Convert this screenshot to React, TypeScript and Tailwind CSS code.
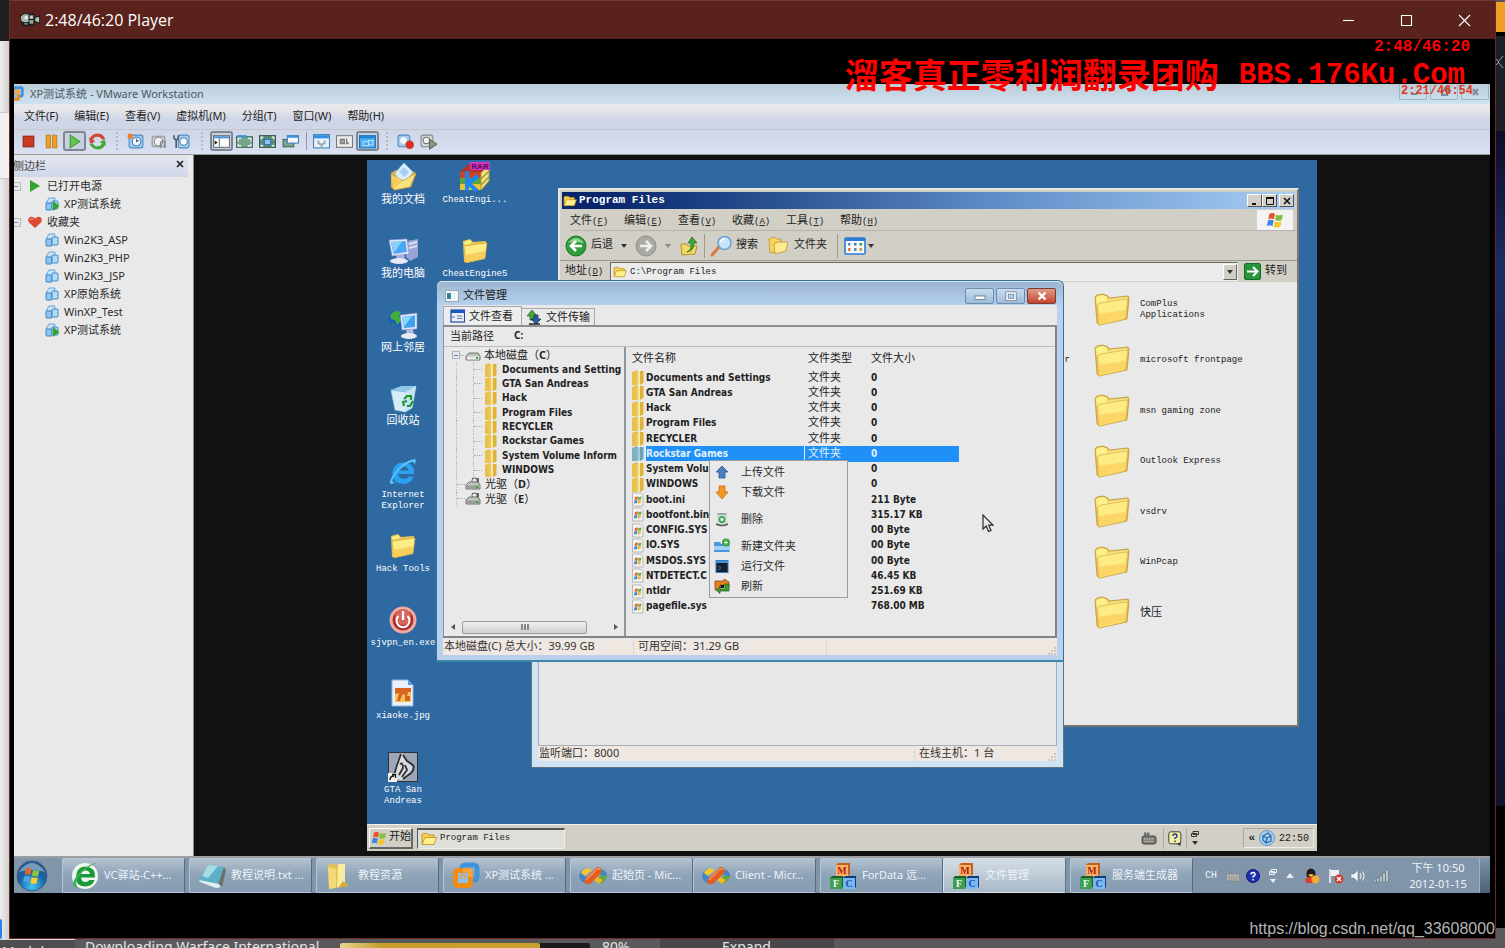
import type { ReactNode } from 'react';

const uiFont = "font-['Noto_Sans','Noto_Sans_CJK_SC',sans-serif]";
const sunFont = "font-['Liberation_Mono','Noto_Sans_CJK_SC',monospace]";

/* ---------- Icons ---------- */

function BigFolder({ className = 'w-9 h-[34px]' }: { className?: string }) {
  return (
    <svg viewBox="0 0 36 34" className={className} aria-hidden="true">
      <path d="M1 4 L3 2 L9 1 L14 3 L15 5 L34 3 L35 5 L33 26 L5 32 L3 30 Z" fill="#ecc650" stroke="#b8923a" strokeWidth="0.8" />
      <path d="M2 5 L4 3 L9 2 L13 4 L14 9 L6 10 L3 13 Z" fill="#faf08c" />
      <path d="M15 6 L33 4 L33 6 L13 9 Z" fill="#f7e48a" />
      <path d="M3.500 13 Q3.500 10.500 7 10 L31 6 Q33.500 6 33.500 8 L31.500 24 Q31 26 29 26.500 L5 32 Z" fill="#fdec86" stroke="#e0b346" strokeWidth="0.8" />
      <path d="M4.500 21 L31.500 17 L30.500 25 L5.500 31 Z" fill="#fbd566" />
    </svg>
  );
}

function DeskFolder() {
  return (
    <svg viewBox="0 0 32 32" className="w-8 h-8" aria-hidden="true">
      <path d="M4 6 L11 4 L14 7 L27 6 L26 24 L8 28 L5 27 Z" fill="#ecc650" />
      <path d="M5 7 L11 5 L13 8 L6 10 Z" fill="#faf08c" />
      <path d="M5 11 L13 10 L15 9.500 L28 8 L26 23 L7 27.500 Z" fill="#fdec86" stroke="#d3a53a" strokeWidth="0.7" />
      <path d="M6 20 L26.500 16 L25.500 23 L7 27 Z" fill="#f9cf5b" />
    </svg>
  );
}

function SmallFolder({ className = 'w-4 h-[14px]' }: { className?: string }) {
  return (
    <svg viewBox="0 0 16 14" className={className} aria-hidden="true">
      <path d="M1 12 V3 Q1 1.500 2.500 1.500 H6 L8 3 H13 V6" fill="#f6cf55" stroke="#b98b1d" strokeWidth="0.8" />
      <path d="M1 12.500 L4 5.500 H15.500 L13 12.500 Z" fill="#fff08e" stroke="#b98b1d" strokeWidth="0.8" />
    </svg>
  );
}

function DocsIcon() {
  return (
    <svg viewBox="0 0 32 32" className="w-8 h-8" aria-hidden="true">
      <path d="M4 12 L9 9 L26 10 L29 13 L24 26 L7 29 L4 26 Z" fill="#e3b540" />
      <path d="M8 12 L17 2 L26 11 L20 20 L10 18 Z" fill="#dceefa" stroke="#8bb8dc" strokeWidth="0.8" />
      <path d="M12 11 L17 6 L22 11 L18 16 Z" fill="#a6d1f2" />
      <path d="M4 13 L16 20 L29 12 L23 26 L7 29 Z" fill="#fae27c" stroke="#cfa036" strokeWidth="0.8" />
      <path d="M4 14 L15 21 L6 28 Z" fill="#f6cc58" />
    </svg>
  );
}

function ComputerIcon() {
  return (
    <svg viewBox="0 0 32 32" className="w-8 h-8" aria-hidden="true">
      <path d="M20 6 L31 4 L31 22 L23 26 L19 22 Z" fill="#9aa3d6" />
      <path d="M22 8 L30 6 V8 L22 10 Z M22 12 L30 10 V12 L22 14 Z" fill="#dfe3f7" />
      <path d="M2 5 L20 4 L22 19 L5 21 Z" fill="#e3e7f6" stroke="#8892c4" strokeWidth="0.6" />
      <path d="M4 7 L18.500 6 L20 17 L6.500 19 Z" fill="#4aa8f0" />
      <path d="M4 7 L15 6 L7 18 Z" fill="#87d3fb" />
      <path d="M9 20 L17 19 L18 24 L10 25 Z" fill="#aab1dc" />
      <ellipse cx="12" cy="26" rx="9" ry="3" fill="#e6e8f4" />
    </svg>
  );
}

function NetworkIcon() {
  return (
    <svg viewBox="0 0 32 32" className="w-8 h-8" aria-hidden="true">
      <circle cx="10" cy="10" r="8" fill="#1f58bf" />
      <path d="M3 7 Q7 0 14 3 L12 8 L15 11 L10 16 L8 11 L4 10 Z" fill="#3fae3c" />
      <path d="M4 13 L9 17 L7 17 Z" fill="#3fae3c" />
      <path d="M13 6 L30 4 L30 20 L15 21 Z" fill="#dfe5f7" stroke="#7f8bc2" strokeWidth="0.6" />
      <path d="M15 8 L28 6.500 L28 18 L17 19 Z" fill="#3fa3ef" />
      <path d="M15 8 L25 7 L17 18 Z" fill="#8bd6fc" />
      <path d="M19 21 L26 20 L27 26 L20 26 Z" fill="#b3b9e0" />
      <ellipse cx="22" cy="27" rx="8" ry="3" fill="#e8eaf6" />
    </svg>
  );
}

function RecycleBin() {
  return (
    <svg viewBox="0 0 32 32" className="w-8 h-8" aria-hidden="true">
      <path d="M4 8 L18 10 L29 4 L25 26 L18 30 L8 28 Z" fill="#d6edf7" stroke="#9cc7e2" strokeWidth="0.8" />
      <path d="M4 8 L14 4 L29 4 L18 10 Z" fill="#8fc9ec" />
      <path d="M18 10 L29 4 L25 26 L18 30 Z" fill="#c3e3f3" />
      <path d="M17 17 L20 14 L24 14 V18 M26 19 L23 24 L20 24 M17 24 L16 20 L20 19" fill="none" stroke="#1f9a2f" strokeWidth="2.200" />
    </svg>
  );
}

function IeIcon() {
  return (
    <svg viewBox="0 0 32 32" className="w-8 h-8" aria-hidden="true">
      <path d="M27 18 H11 Q12 23 17 23 Q20 23 21.500 20.500 H26.500 Q24 28 16 28 Q5 27 5.500 17 Q6 7 16.500 6.500 Q28 7 27 18 Z M11.500 14.500 H21.500 Q21 10.500 16.500 10.500 Q12.500 10.500 11.500 14.500 Z" fill="#2ba1f3" fillRule="evenodd" />
      <path d="M5 28 Q0 28 6 19 Q15 5 27 3 Q31 3 27 9 Q28 4 22 7 Q10 14 6 23 Q4 27 9 26 Z" fill="#56c1fb" />
    </svg>
  );
}

function PowerIcon() {
  return (
    <svg viewBox="0 0 32 32" className="w-8 h-8" aria-hidden="true">
      <circle cx="16" cy="16" r="13.500" fill="#f3aaa4" />
      <circle cx="16" cy="16" r="10.500" fill="#a82f2c" />
      <circle cx="16" cy="13" r="8" fill="#d5645c" />
      <path d="M11.500 12 A6.500 6.500 0 1 0 20.500 12" fill="none" stroke="#fff" strokeWidth="2" />
      <path d="M16 7 V16" stroke="#fff" strokeWidth="2.400" />
    </svg>
  );
}

function JpgIcon() {
  return (
    <svg viewBox="0 0 32 32" className="w-8 h-8" aria-hidden="true">
      <path d="M5 3 H21 L26 8 V29 H5 Z" fill="#eaf1fb" stroke="#8fb4e4" />
      <path d="M21 3 V8 H26 Z" fill="#4f9de8" />
      <path d="M8 11 H24 V25 H8 Z" fill="#f6c25c" />
      <path d="M8 11 H24 V15 H21 L20 19 H23 V24 H18 V17 L15 18 L13 24 H10 L12 16 L8 17 Z" fill="#d9641f" />
    </svg>
  );
}

function GtaIcon() {
  return (
    <svg viewBox="0 0 32 32" className="w-8 h-8" aria-hidden="true">
      <rect x="1.500" y="1.500" width="29" height="29" fill="#9da6b9" stroke="#2c3038" />
      <path d="M6 24 L10 10 L15 2 L19 9 L26 16 L23 24 L15 29 L9 28 Z" fill="#d8dadd" />
      <path d="M14 3 L10 14 L7 24 M16 4 L20 10 L26 14 Q28 18 24 22 L16 28 M13 13 Q16 11 16 17 L12 24 M18 14 L20 19 L15 26" fill="none" stroke="#2b2d31" strokeWidth="1.800" />
      <rect x="1" y="22" width="9" height="9" fill="#f2f2f2" />
      <path d="M3 29 Q3 25 7 25 M5 23.500 H8.500 V27" fill="none" stroke="#111" strokeWidth="1.400" />
    </svg>
  );
}

function RarIcon() {
  return (
    <svg viewBox="0 0 32 32" className="w-8 h-8" aria-hidden="true">
      <path d="M1 11 L10 3 H30 L22 12 Z" fill="#b53324" />
      <path d="M1 11 H22 V17 H1 Z" fill="#c9432c" />
      <path d="M1 17 H22 V23 H1 Z" fill="#5fa13a" />
      <path d="M1 23 H22 V29 H1 Z" fill="#e8c332" />
      <path d="M22 12 L30 4 V20 L22 29 Z" fill="#efe38b" stroke="#b59a31" />
      <path d="M22 18 L30 10 M22 24 L30 16" stroke="#a58f2f" strokeWidth="1.200" />
      <path d="M8 10 V30 M19 15 L9 22 L18 30" fill="none" stroke="#1a86ee" strokeWidth="4" />
      <rect x="11" y="1" width="20" height="8" fill="#d036c4" />
      <text x="21" y="8" fontSize="8" fontWeight="700" textAnchor="middle" fill="#5a0d52" fontFamily="Liberation Sans">RAR</text>
    </svg>
  );
}

function WinFlag({ className = 'w-4 h-4' }: { className?: string }) {
  return (
    <svg viewBox="0 0 16 16" className={className} aria-hidden="true">
      <path d="M3 2.500 Q5.500 1 8 2.500 L7 7.500 Q4.500 6 2 7.500 Z" fill="#e8542a" />
      <path d="M9 3 Q11.500 4.500 15 3 L14 8 Q11 9.500 8 8 Z" fill="#7fc241" />
      <path d="M1.800 8.500 Q4.300 7 6.800 8.500 L5.800 13.500 Q3.300 12 .8 13.500 Z" fill="#3a86dd" />
      <path d="M7.800 9 Q10.500 10.500 13.700 9 L12.700 14 Q10 15.500 6.800 14 Z" fill="#f7c52d" />
    </svg>
  );
}

function ZipFolder({ selected = false, className = 'h-[14px]' }: { selected?: boolean; className?: string }) {
  return (
    <svg viewBox="0 0 14 15" className={`w-[14px] shrink-0 ${className}`} preserveAspectRatio="none" aria-hidden="true">
      <path d="M1 2 L6 0 V15 H1 Z" fill={selected ? '#7fb0bf' : '#eac04a'} />
      <path d="M5 2 L10 1 V14 L5 15 Z" fill={selected ? '#9fd0df' : '#f9e893'} />
      <path d="M9 1 H12.500 V13 L9 15 Z" fill={selected ? '#6ba3bb' : '#dfb23c'} />
      <path d="M6 1 V15" stroke={selected ? '#5b8fa3' : '#c99a2a'} strokeWidth="0.8" />
    </svg>
  );
}

function SysFile() {
  return (
    <svg viewBox="0 0 14 15" className="w-[14px] h-[15px] shrink-0" aria-hidden="true">
      <path d="M1.500 1 H9.500 L12 3.500 V14 H1.500 Z" fill="#f3f3f3" stroke="#a9a9a9" strokeWidth="0.8" />
      <path d="M4 5 L7 4.500 L6.500 7.500 L3.500 8 Z" fill="#e5652e" />
      <path d="M7.500 5 L10.500 4.500 L10 7.500 L7 8 Z" fill="#63b043" />
      <path d="M3.400 8.600 L6.400 8 L6 11 L3 11.500 Z" fill="#3d84d6" />
      <path d="M7 8.600 L10 8 L9.500 11 L6.500 11.500 Z" fill="#efb92e" />
    </svg>
  );
}

function DriveIcon({ disc = false }: { disc?: boolean }) {
  return (
    <svg viewBox="0 0 16 14" className="w-4 h-[14px] shrink-0" aria-hidden="true">
      {disc && <path d="M7 1 H14 V7 H7 Z" fill="#6b6b6b" />}
      {disc && <circle cx="9.500" cy="3.500" r="2.600" fill="#e8e8e8" stroke="#333" strokeWidth="0.7" />}
      <path d="M1 8 L4 5 H13 L15 8 V12 H1 Z" fill="#c2c4c2" stroke="#666" strokeWidth="0.9" />
      <path d="M2 8.500 H14 V11.500 H2 Z" fill={disc ? '#9b9b9b' : '#ececec'} />
      <rect x="11" y="9" width="2" height="2" fill="#3ea33c" />
    </svg>
  );
}

function VmIcon({ running = false }: { running?: boolean }) {
  return (
    <svg viewBox="0 0 16 14" className="w-4 h-[14px] shrink-0" aria-hidden="true">
      <path d="M2 6 L5 1 L11 1 L10 8 Z" fill="#c9e4f8" stroke="#5a9fd8" strokeWidth="0.9" />
      <rect x="2" y="6" width="6" height="7" rx="1" fill="#8cc6f1" stroke="#2f76b5" strokeWidth="0.9" />
      <rect x="8" y="4" width="6" height="8" rx="1" fill="#b4dcf8" stroke="#2f7fc5" strokeWidth="0.9" />
      {running && <path d="M9 4 L15.500 9 L9 14 Z" fill="#36a52e" />}
    </svg>
  );
}

function VmwareLogo({ className }: { className: string }) {
  return (
    <svg viewBox="0 0 28 28" className={className} aria-hidden="true">
      <rect x="10" y="3" width="15" height="15" rx="3" fill="none" stroke="#3f94dc" strokeWidth="5" />
      <rect x="3.500" y="8.500" width="15" height="15" rx="2" fill="none" stroke="#f08b16" strokeWidth="5" />
      <rect x="6" y="11" width="10" height="10" fill="#8fc0ea" />
      <path d="M9 17 V13 H13 V17" fill="none" stroke="#e9a24a" strokeWidth="1.500" />
      <path d="M11 8.500 H17 Q18.500 8.500 18.500 11 V15" fill="none" stroke="#f7a83c" strokeWidth="4" />
    </svg>
  );
}

function CameraIcon() {
  return (
    <svg viewBox="0 0 22 16" className="w-[21px] h-4" aria-hidden="true">
      <path d="M0 3 L3 1 H15 V5 L21 3 V12 L15 10 V13 L7 15 L2 13 Z" fill="#1b1d1c" />
      <path d="M1 4 L4 2 H9 V10 H3 L1 8 Z" fill="#a8b3ad" />
      <path d="M5 4 H8 V7 H5 Z" fill="#f2f5f3" />
      <path d="M10 3 H14 V7 H10 Z M10 8 H14 V12 H10 Z" fill="#8fa39b" />
      <path d="M11 4 H13 V6 H11 Z" fill="#e3e9e6" />
      <path d="M16 6 L20 4.500 V10.500 L16 9 Z" fill="#b3c0bb" />
      <path d="M4 11 H8 V13 H5 Z" fill="#5d9277" />
    </svg>
  );
}

/* ---------- VMware toolbar ---------- */

function ToolGlyph({ name }: { name: string }) {
  const glyphs: Record<string, ReactNode> = {
    stop: <rect x="3" y="3" width="10" height="10" fill="#cc3b22" stroke="#8e2414" />,
    pause: <path d="M3 2 H7 V14 H3 Z M9 2 H13 V14 H9 Z" fill="#f2a01e" stroke="#b5700a" strokeWidth="0.7" />,
    play: <path d="M4 2 L13 8 L4 14 Z" fill="#66c552" stroke="#3b9a2b" />,
    reset: (
      <>
        <path d="M2 7 Q3 2 8 2 Q12 2 14 6" fill="none" stroke="#d0463a" strokeWidth="3" />
        <path d="M14 9 Q13 14 8 14 Q4 14 2 10" fill="none" stroke="#43a83c" strokeWidth="3" />
        <path d="M0 4 L1 10 L6 8 Z" fill="#d0463a" />
        <path d="M16 12 L15 6 L10 8.500 Z" fill="#43a83c" />
      </>
    ),
    snap: (
      <>
        <rect x="2" y="2" width="13" height="12" rx="2" fill="#9ccbef" stroke="#4d8dc2" />
        <circle cx="9" cy="8" r="4" fill="#f4f9fd" stroke="#4a7fb0" />
        <path d="M9 5.500 V8 L11 7" fill="none" stroke="#315f8b" />
        <circle cx="3" cy="3" r="2.500" fill="#f07d2b" />
      </>
    ),
    revert: (
      <>
        <rect x="2" y="3" width="12" height="10" rx="2" fill="#d0d3d6" stroke="#8e9397" />
        <circle cx="8" cy="8" r="4" fill="#eef0f1" stroke="#8b9094" />
        <path d="M10 14 V10 Q10 7 14 8 V14" fill="none" stroke="#858a8e" strokeWidth="1.500" />
      </>
    ),
    manage: (
      <>
        <rect x="5" y="2" width="10" height="12" rx="2" fill="#a5cfee" stroke="#4d8dc2" />
        <circle cx="10" cy="8" r="3.500" fill="#f2f8fc" stroke="#4a7fb0" />
        <path d="M1 2 V5 L3 7 V14 M5 2 V5 L3 7" fill="none" stroke="#4c5964" strokeWidth="1.500" />
      </>
    ),
    sidebar: (
      <>
        <rect x="0.500" y="2.500" width="15" height="11" fill="#fafafa" stroke="#6c7177" />
        <path d="M1 3 H15 V5 H1 Z" fill="#4f97d8" />
        <path d="M6 5 V13" stroke="#6c7177" />
        <path d="M1.500 7 L4.500 9 L1.500 11 Z" fill="#222" />
      </>
    ),
    fit: (
      <>
        <rect x="0.500" y="3.500" width="15" height="10" fill="#76a58f" stroke="#3f6b58" />
        <path d="M1 2 H10 V4 H1 Z" fill="#3f93d8" />
        <path d="M2 8 V5 H5 M11 5 H14 V8 M14 10 V12 H11 M5 12 H2 V10" fill="none" stroke="#e9f3ee" strokeWidth="1.200" />
      </>
    ),
    full: (
      <>
        <rect x="0.500" y="2.500" width="15" height="11" fill="#5d8c79" stroke="#35594a" />
        <rect x="5" y="6" width="6" height="5" fill="#8ac6f0" stroke="#2a6ea8" />
        <path d="M2 6 V4 H4 M12 4 H14 V6 M14 11 V12 H12 M4 12 H2 V11" fill="none" stroke="#e9f3ee" strokeWidth="1.200" />
      </>
    ),
    unity: (
      <>
        <rect x="1" y="6" width="10" height="7" fill="#79a58f" stroke="#3f6b58" />
        <rect x="5" y="2.500" width="10.500" height="7" fill="#f4f8fb" stroke="#3f80b5" />
        <path d="M5 2.500 H15.500 V4.500 H5 Z" fill="#3f93d8" />
      </>
    ),
    settings: (
      <>
        <rect x="0.500" y="1.500" width="15" height="12.500" fill="#e8f2fa" stroke="#3f80b5" />
        <path d="M1 2 H15 V5 H1 Z" fill="#2f8fe0" />
        <path d="M5 7 V9.500 Q8 12 11 9.500 V7 M8 10 V14" fill="none" stroke="#9aa7b1" strokeWidth="1.800" />
      </>
    ),
    summary: (
      <>
        <rect x="0.500" y="2.500" width="15" height="11" fill="#ededea" stroke="#77797a" />
        <path d="M4 6 H8 V10 H4 Z M10 5 V10 H12" fill="#a0a19f" stroke="#77797a" />
      </>
    ),
    console: (
      <>
        <rect x="0.500" y="2.500" width="15" height="11.500" fill="#50aff0" stroke="#2471b8" />
        <path d="M1 3 H15 V5 H1 Z" fill="#1e7fd6" />
        <path d="M4 8 H9 V12 H4 Z M9 7 H13 V11 H9 Z" fill="none" stroke="#b9e2fc" />
      </>
    ),
    rec: (
      <>
        <rect x="1" y="2" width="11" height="11" rx="2" fill="#a7cdea" stroke="#4d8dc2" />
        <circle cx="6" cy="7" r="3" fill="#f2f8fc" />
        <circle cx="12" cy="11" r="4" fill="#d8341f" />
      </>
    ),
    replay: (
      <>
        <rect x="1" y="2" width="11" height="11" rx="2" fill="#d3d5d6" stroke="#85898c" />
        <circle cx="6" cy="7" r="3" fill="#f4f4f4" stroke="#777" />
        <path d="M9 6 L16 10.500 L9 15 Z" fill="#8d9a86" stroke="#5d6658" />
      </>
    ),
  };
  return (
    <svg viewBox="0 0 16 16" className="w-[17px] h-[17px]" aria-hidden="true">
      {glyphs[name]}
    </svg>
  );
}

const toolGroups = [
  { items: ['stop', 'pause', 'play', 'reset'], sep: 'w-[15px]' },
  { items: ['snap', 'revert', 'manage'], sep: 'w-[17px]' },
  { items: ['sidebar', 'fit', 'full', 'unity'], sep: 'w-2' },
  { items: ['settings', 'summary', 'console'], sep: 'w-[15px]' },
  { items: ['rec', 'replay'], sep: '' },
];

const pressed = ['play', 'sidebar', 'console'];

function VmToolbar() {
  return (
    <div className="flex items-center h-[25px] pl-[3px] border-t border-[#c3c6cc] bg-linear-to-b from-[#cfd6e6] to-[#d9e0f2]">
      {toolGroups.map((group, i) => (
        <div key={i} className="flex items-center pb-[2px]">
          {group.items.map((name) => (
            <button
              key={name}
              aria-label={name}
              className={
                pressed.includes(name)
                  ? 'flex items-center justify-center w-[23px] h-5 rounded-[3px] border-2 border-[#7f8793] bg-[#c6d0e0]'
                  : 'flex items-center justify-center w-[23px] h-5'
              }
            >
              <ToolGlyph name={name} />
            </button>
          ))}
          {group.sep && (
            <div className={`${group.sep} h-[18px] flex justify-center`}>
              <div className={group.sep === 'w-2' ? 'w-px bg-[#8f97a6]' : 'border-l-2 border-dotted border-[#b4bac8]'} />
            </div>
          )}
        </div>
      ))}
    </div>
  );
}

/* ---------- VMware sidebar ---------- */

const favorites = ['Win2K3_ASP', 'Win2K3_PHP', 'Win2K3_JSP', 'XP原始系统', 'WinXP_Test'];

function TreeToggle() {
  return (
    <span className="w-[7px] h-[9px] border border-l-0 border-[#b9bcc4] flex items-center">
      <span className="w-1 h-px bg-[#7789b5]" />
    </span>
  );
}

function VmSidebar() {
  return (
    <aside className="w-[180px] shrink-0 bg-[#e9e9e9] border-r border-[#8a8a8a] text-[11px] text-[#2b2b2b]">
      <div className="flex items-center justify-between h-[22px] pr-1 mr-[5px] overflow-hidden bg-linear-to-b from-[#e5e7ee] to-[#cfd7e8]">
        <span className="-ml-px text-[#444]">侧边栏</span>
        <button aria-label="关闭侧边栏" className="pb-1">
          <svg viewBox="0 0 8 8" className="w-2 h-2" aria-hidden="true">
            <path d="M1 1 L7 7 M7 1 L1 7" stroke="#222" strokeWidth="1.700" />
          </svg>
        </button>
      </div>
      <ul>
        <li className="flex items-center h-[18px] gap-2">
          <TreeToggle />
          <svg viewBox="0 0 10 14" className="w-[10px] h-[14px] ml-[1px]" aria-hidden="true">
            <path d="M0 1 L10 7 L0 13 Z" fill="#2fa52b" />
          </svg>
          <span className="ml-[-1px]">已打开电源</span>
        </li>
        <li className="flex items-center h-[18px] gap-1 pl-[30px]">
          <VmIcon running />
          <span>XP测试系统</span>
        </li>
        <li className="flex items-center h-[18px] gap-[7px]">
          <TreeToggle />
          <svg viewBox="0 0 14 12" className="w-[14px] h-3" aria-hidden="true">
            <path d="M7 12 L1 6.500 Q-1 3 2 1 Q5 0 7 2.500 Q9 0 12 1 Q15 3 13 6.500 Z" fill="#dc4a35" />
            <path d="M2 4 Q3 2 5 3" stroke="#f6a899" fill="none" />
          </svg>
          <span className="-ml-[2px]">收藏夹</span>
        </li>
        {favorites.map((name) => (
          <li key={name} className="flex items-center h-[18px] gap-1 pl-[30px]">
            <VmIcon />
            <span>{name}</span>
          </li>
        ))}
        <li className="flex items-center h-[18px] gap-1 pl-[30px]">
          <VmIcon running />
          <span>XP测试系统</span>
        </li>
      </ul>
    </aside>
  );
}

/* ---------- XP desktop ---------- */

const desktopIcons: { label: ReactNode; icon: ReactNode; cjk?: boolean }[] = [
  { label: '我的文档', icon: <DocsIcon />, cjk: true },
  { label: '我的电脑', icon: <ComputerIcon />, cjk: true },
  { label: '网上邻居', icon: <NetworkIcon />, cjk: true },
  { label: '回收站', icon: <RecycleBin />, cjk: true },
  { label: <>Internet<br />Explorer</>, icon: <IeIcon /> },
  { label: 'Hack Tools', icon: <DeskFolder /> },
  { label: 'sjvpn_en.exe', icon: <PowerIcon /> },
  { label: 'xiaoke.jpg', icon: <JpgIcon /> },
  { label: <>GTA San<br />Andreas</>, icon: <GtaIcon /> },
  { label: 'CheatEngi...', icon: <RarIcon /> },
  { label: 'CheatEngine5', icon: <DeskFolder /> },
];

const explorerMenu = [
  ['文件', 'F'],
  ['编辑', 'E'],
  ['查看', 'V'],
  ['收藏', 'A'],
  ['工具', 'T'],
  ['帮助', 'H'],
];

const explorerFolders = ['ComPlus Applications', 'microsoft frontpage', 'msn gaming zone', 'Outlook Express', 'vsdrv', 'WinPcap', '快压'];

function MenuKey({ children }: { children: string }) {
  return (
    <span className="text-[9px]">
      (<u>{children}</u>)
    </span>
  );
}

function Caret({ className = 'text-[#333]' }: { className?: string }) {
  return (
    <svg viewBox="0 0 6 4" className={`w-[6px] h-1 ${className}`} aria-hidden="true">
      <path d="M0 0 H6 L3 4 Z" fill="currentColor" />
    </svg>
  );
}

function ClassicButton({ label, children }: { label: string; children: ReactNode }) {
  return (
    <button
      aria-label={label}
      className="flex items-center justify-center w-[15px] h-[13px] bg-[#d4d0c8] border border-t-white border-l-white border-r-[#555] border-b-[#555]"
    >
      <svg viewBox="0 0 10 10" className="w-[10px] h-[10px]" aria-hidden="true">
        {children}
      </svg>
    </button>
  );
}

function ExplorerWindow() {
  return (
    <section className={`absolute left-[191px] top-[28px] w-[741px] h-[539px] flex flex-col bg-[#d1cfc6] border-2 border-t-[#e6e5df] border-l-[#e6e5df] border-r-[#77756e] border-b-[#77756e] text-[11px] text-[#222] ${sunFont}`}>
      <header className="flex items-center h-[17px] mx-[2px] mt-[2px] px-px bg-linear-to-r from-[#08246b] from-5% via-[#5f8fc8] via-60% to-[#a9cdf5]">
        <SmallFolder className="w-[14px] h-3" />
        <h2 className="ml-[2px] flex-1 font-bold text-white">Program Files</h2>
        <ClassicButton label="最小化"><path d="M2 8 H6" stroke="#111" strokeWidth="2" /></ClassicButton>
        <ClassicButton label="最大化"><path d="M1.500 2 H8.500 V8.500 H1.500 Z" fill="none" stroke="#111" /><path d="M1 2 H9" stroke="#111" strokeWidth="2" /></ClassicButton>
        <span className="w-[2px]" />
        <ClassicButton label="关闭"><path d="M2 2 L8 8 M8 2 L2 8" stroke="#111" strokeWidth="1.600" /></ClassicButton>
      </header>

      <nav className="flex items-center h-[21px] mt-[1px] ml-[10px] border-b border-[#b4b2aa]">
        {explorerMenu.map(([text, key]) => (
          <button key={key} className="w-[54px] pt-[2px] text-left whitespace-nowrap">
            {text}
            <MenuKey>{key}</MenuKey>
          </button>
        ))}
        <div className="flex items-center justify-center w-9 h-5 ml-auto mr-1 bg-[#f4f4f4]">
          <WinFlag className="w-[18px] h-[18px]" />
        </div>
      </nav>

      <div className="flex items-center h-[30px] pl-[5px] border-b border-[#99978f]">
        <button className="flex items-center gap-1">
          <svg viewBox="0 0 22 22" className="w-[22px] h-[22px]" aria-hidden="true">
            <circle cx="11" cy="11" r="10" fill="#2f9d3a" stroke="#1c7426" />
            <path d="M3 8 Q11 -2 19 8 Q11 6 3 8 Z" fill="#8fd58e" />
            <path d="M17 11 H7 M11 6 L6 11 L11 16" fill="none" stroke="#fff" strokeWidth="2.600" />
          </svg>
          后退
        </button>
        <span className="w-[22px] flex justify-center"><Caret /></span>
        <button aria-label="前进">
          <svg viewBox="0 0 22 22" className="w-[22px] h-[22px]" aria-hidden="true">
            <circle cx="11" cy="11" r="10" fill="#a9a9a6" stroke="#8e8e8b" />
            <path d="M5 11 H15 M11 6 L16 11 L11 16" fill="none" stroke="#eee" strokeWidth="2.600" />
          </svg>
        </button>
        <span className="w-[22px] flex justify-center"><Caret className="text-[#8b8982]" /></span>
        <button aria-label="向上">
          <svg viewBox="0 0 20 20" className="w-5 h-5" aria-hidden="true">
            <path d="M2 8 H8 L9 10 H18 L16 18 L3 19 Z" fill="#f6d765" stroke="#b58f2b" />
            <path d="M8 16 Q13 14 12 7 H9 L13 1 L18 7 H15 Q15 15 8 16 Z" fill="#3caa32" stroke="#21761c" strokeWidth="0.8" />
          </svg>
        </button>
        <span className="w-px h-6 mx-[5px] bg-[#9d9b94]" />
        <button className="flex items-center gap-1">
          <svg viewBox="0 0 22 22" className="w-[22px] h-[22px]" aria-hidden="true">
            <path d="M2 20 L9 12" stroke="#d27a3d" strokeWidth="3" strokeLinecap="round" />
            <circle cx="14.500" cy="8" r="6.500" fill="#c7e5fa" stroke="#6ba0d2" strokeWidth="1.600" />
            <path d="M10.500 7 Q12 3.500 15 4" fill="none" stroke="#fff" strokeWidth="1.500" />
          </svg>
          搜索
        </button>
        <button className="flex items-center gap-1 ml-[10px]">
          <svg viewBox="0 0 22 20" className="w-[22px] h-5" aria-hidden="true">
            <path d="M1 3 L6 1 L9 3 H13 V15 L2 17 Z" fill="#f5d55f" stroke="#bb9330" strokeWidth="0.8" />
            <path d="M6 8 L10 6 H20 L18 15 L7 18 Z" fill="#fdeb92" stroke="#bb9330" strokeWidth="0.8" />
          </svg>
          文件夹
        </button>
        <span className="w-px h-6 ml-[10px] mr-[6px] bg-[#9d9b94]" />
        <button aria-label="查看方式" className="flex items-center gap-[2px]">
          <svg viewBox="0 0 22 18" className="w-[22px] h-[18px]" aria-hidden="true">
            <rect x="1" y="1" width="20" height="16" rx="1" fill="#f6f9fc" stroke="#2c7cd8" strokeWidth="1.600" />
            <path d="M1 1 H21 V4 H1 Z" fill="#2c7cd8" />
            <path d="M4 6 H6.500 V8.500 H4 Z M10 11 H12.500 V14 H10 Z" fill="#6d7fc4" />
            <path d="M10 6 H12.500 V8.500 H10 Z" fill="#2874d0" />
            <path d="M15.500 6 H18 V8.500 H15.500 Z" fill="#2fa044" />
            <path d="M4 11 H6.500 V14 H4 Z" fill="#e5773a" />
            <path d="M15.500 11 H18 V14 H15.500 Z" fill="#d79b2c" />
          </svg>
          <Caret />
        </button>
      </div>

      <div className="flex items-center h-[21px] pl-[5px] pr-[2px]">
        <label htmlFor="address" className="w-[45px]">
          地址<MenuKey>D</MenuKey>
        </label>
        <div className="flex items-center flex-1 h-[19px] pl-[2px] bg-[#ebebeb] border border-t-[#6d6b65] border-l-[#6d6b65] border-r-[#eee] border-b-[#eee]">
          <SmallFolder className="w-[14px] h-3" />
          <input id="address" defaultValue="C:\Program Files" className="flex-1 ml-[3px] pt-[2px] bg-transparent text-[9px] outline-none" />
          <button aria-label="地址列表" className="flex items-center justify-center w-[14px] h-4 bg-[#d1cfc6] border border-t-white border-l-white border-r-[#666] border-b-[#666]">
            <Caret />
          </button>
        </div>
        <button className="flex items-center gap-1 ml-[6px] mr-2">
          <svg viewBox="0 0 17 17" className="w-[17px] h-[17px]" aria-hidden="true">
            <rect x="0.500" y="0.500" width="16" height="16" rx="1.500" fill="#27933a" stroke="#16692a" />
            <path d="M3 8.500 H13 M9 4 L13.500 8.500 L9 13" fill="none" stroke="#fff" strokeWidth="2" />
          </svg>
          转到
        </button>
      </div>

      <div className="flex-1 flex bg-[#e9e9e9] pt-[3px]">
        <div className="w-[510px] pt-[66px] text-right text-[9px] leading-[18px]">r</div>
        <ul className="ml-[24px] text-[9px] leading-[11px]">
          {explorerFolders.map((name, i) => (
            <li key={name} className={i % 2 ? 'flex items-center h-[51px]' : 'flex items-center h-[50px]'}>
              <BigFolder />
              <span className={name === '快压' ? 'ml-[10px] text-[11px]' : i === 0 ? 'ml-[10px] w-20' : 'ml-[10px]'}>{name}</span>
            </li>
          ))}
        </ul>
      </div>
    </section>
  );
}

function SizeGrip() {
  return (
    <svg viewBox="0 0 8 8" className="w-2 h-2 ml-auto mt-auto mr-px" aria-hidden="true">
      <path d="M6 0 H8 V2 H6 Z M3 3 H5 V5 H3 Z M6 3 H8 V5 H6 Z M0 6 H2 V8 H0 Z M3 6 H5 V8 H3 Z M6 6 H8 V8 H6 Z" fill="#cfc8c3" />
    </svg>
  );
}

function ServerWindow() {
  return (
    <section className={`absolute left-[164px] top-[490px] w-[533px] h-[118px] flex flex-col p-[6px] bg-[#cfe3f2] border border-[#5d7485] text-[11px] text-[#333] ${uiFont}`}>
      <div className="flex-1 bg-[#e8e8e8] border border-[#a5acb3]" />
      <footer className="flex items-center h-[15px] bg-[#efe7e1]">
        <span className="w-[376px] pl-[1px]">监听端口：8000</span>
        <span className="pl-1 border-l border-[#dcd6d1]">在线主机：1 台</span>
        <SizeGrip />
      </footer>
    </section>
  );
}

const treeFolders = ['Documents and Setting', 'GTA San Andreas', 'Hack', 'Program Files', 'RECYCLER', 'Rockstar Games', 'System Volume Inform', 'WINDOWS'];

const files: [string, string, string][] = [
  ['Documents and Settings', '文件夹', '0'],
  ['GTA San Andreas', '文件夹', '0'],
  ['Hack', '文件夹', '0'],
  ['Program Files', '文件夹', '0'],
  ['RECYCLER', '文件夹', '0'],
  ['Rockstar Games', '文件夹', '0'],
  ['System Volu', '', '0'],
  ['WINDOWS', '', '0'],
  ['boot.ini', '', '211 Byte'],
  ['bootfont.bin', '', '315.17 KB'],
  ['CONFIG.SYS', '', '00 Byte'],
  ['IO.SYS', '', '00 Byte'],
  ['MSDOS.SYS', '', '00 Byte'],
  ['NTDETECT.C', '', '46.45 KB'],
  ['ntldr', '', '251.69 KB'],
  ['pagefile.sys', '', '768.00 MB'],
];

function AeroButton({ label, close = false, children }: { label: string; close?: boolean; children: ReactNode }) {
  return (
    <button
      aria-label={label}
      className={
        close
          ? 'flex items-center justify-center w-[29px] h-4 rounded-[2px] border border-[#7d3a30] bg-linear-to-b from-[#e09a88] to-[#c4432b]'
          : 'flex items-center justify-center w-[29px] h-4 rounded-[2px] border border-[#6f8cab] bg-linear-to-b from-[#c9dcef] to-[#9dbcdb]'
      }
    >
      <svg viewBox="0 0 12 10" className="w-3 h-[10px]" aria-hidden="true">
        {children}
      </svg>
    </button>
  );
}

function ContextMenu() {
  const item = 'flex items-center w-full h-5 pl-1 gap-[11px] text-left';
  return (
    <div role="menu" className="absolute left-[272px] top-[179px] w-[139px] h-[138px] pt-[1px] bg-[#e9e9e9] border border-[#9c9c9c] text-[11px] text-[#2b2b2b]">
      <button role="menuitem" className={item}>
        <svg viewBox="0 0 16 16" className="w-4 h-4" aria-hidden="true">
          <path d="M8 2 L14 8 H11 V14 H5 V8 H2 Z" fill="#4b7fc0" stroke="#2f5a94" strokeWidth="0.8" />
        </svg>
        上传文件
      </button>
      <button role="menuitem" className={item}>
        <svg viewBox="0 0 16 16" className="w-4 h-4" aria-hidden="true">
          <path d="M8 15 L14 8 H11 V2 H5 V8 H2 Z" fill="#f4971f" stroke="#c66d0d" strokeWidth="0.8" />
        </svg>
        下载文件
      </button>
      <div className="h-[7px]" />
      <button role="menuitem" className={item}>
        <svg viewBox="0 0 16 16" className="w-4 h-4" aria-hidden="true">
          <path d="M3 2 H13 L12 4 H4 Z" fill="#9aa79a" />
          <path d="M4 4 H12 V12 H4 Z" fill="#e8efe8" stroke="#a9b7a9" strokeWidth="0.6" />
          <circle cx="8" cy="8.500" r="2.600" fill="none" stroke="#2fa34a" strokeWidth="1.600" />
          <path d="M2 13 Q8 16 14 13" fill="none" stroke="#565e56" strokeWidth="1.400" />
        </svg>
        删除
      </button>
      <div className="h-[7px]" />
      <button role="menuitem" className={item}>
        <svg viewBox="0 0 16 16" className="w-4 h-4" aria-hidden="true">
          <path d="M0 4 H6 L7 6 H15.500 V14 H0 Z" fill="#4b95dc" />
          <path d="M0 8 H15.500 V12 H0 Z" fill="#a5cff5" />
          <circle cx="12" cy="4.500" r="4" fill="#37a63f" />
          <path d="M12 2.500 V6.500 M10 4.500 H14" stroke="#fff" />
        </svg>
        新建文件夹
      </button>
      <button role="menuitem" className={item}>
        <svg viewBox="0 0 16 16" className="w-4 h-4" aria-hidden="true">
          <rect x="2" y="2.500" width="12" height="12" fill="#13202f" stroke="#3b78b8" />
          <path d="M2 3 H14 V5 H2 Z" fill="#4a94dc" />
          <path d="M4 8 L7 10 L4 12" fill="none" stroke="#5d6f83" />
        </svg>
        运行文件
      </button>
      <button role="menuitem" className={item}>
        <svg viewBox="0 0 16 16" className="w-4 h-4" aria-hidden="true">
          <path d="M1 3 H10 V1 L15 4 V9 H11 V7 H6 V12 H1 Z" fill="#e67e22" stroke="#7d3f0c" strokeWidth="0.7" />
          <path d="M15 6 V13 H6 V15.500 L2 12 L6 9 V11 H11 V6 Z" fill="#3e9d2c" stroke="#22601a" strokeWidth="0.7" />
          <rect x="6.500" y="7" width="3.500" height="3" fill="#1c1c1c" />
        </svg>
        刷新
      </button>
    </div>
  );
}

function FileManagerWindow() {
  return (
    <section className={`absolute left-[69px] top-[120px] w-[628px] h-[382px] flex flex-col px-[6px] pb-[5px] bg-[#b9d1ec] border border-[#3b6f96] border-b-2 border-b-[#3d87ab] rounded-t-md text-[11px] text-[#222] ${uiFont}`}>
      <header className="flex items-center h-6 -mx-[6px] pt-1 pl-2 pr-[7px] rounded-t-md border-t border-[#d9e7f4] bg-linear-to-b from-[#9cb6d1] to-[#b5d0ee]">
        <svg viewBox="0 0 14 12" className="w-[14px] h-3" aria-hidden="true">
          <rect x="0.500" y="0.500" width="13" height="11" fill="#f3f6f8" stroke="#9fa9b1" />
          <path d="M2 3 H6 V9 H2 Z" fill="#2d8a8d" />
        </svg>
        <h2 className="ml-1 flex-1">文件管理</h2>
        <div className="flex gap-[2px]">
          <AeroButton label="最小化"><rect x="1" y="5" width="10" height="3.500" fill="#fff" stroke="#5c7387" strokeWidth="0.8" /></AeroButton>
          <AeroButton label="最大化"><rect x="2" y="2" width="8" height="6.500" fill="none" stroke="#5c7387" strokeWidth="3" /><rect x="2" y="2" width="8" height="6.500" fill="none" stroke="#fff" strokeWidth="1.600" /></AeroButton>
          <AeroButton label="关闭" close><path d="M2.500 1.500 L9.500 8.500 M9.500 1.500 L2.500 8.500" stroke="#fff" strokeWidth="2.400" /></AeroButton>
        </div>
      </header>

      <div className="flex items-end h-5 bg-[#e9e9e9]">
        <button className="flex items-center h-[19px] w-[79px] pl-[5px] gap-1 border border-b-0 border-[#a8a8a8] bg-[#ededed] whitespace-nowrap">
          <svg viewBox="0 0 16 14" className="w-4 h-[14px] shrink-0" aria-hidden="true">
            <rect x="2" y="1" width="13.500" height="12" fill="#e9f0fa" stroke="#1d4ca5" strokeWidth="1.200" />
            <path d="M2 1 H15.500 V4 H2 Z" fill="#1d57c0" />
            <path d="M1 8 H6 M8 7 H13 M8 9.500 H13" stroke="#5e78a8" strokeWidth="1.200" />
          </svg>
          文件查看
        </button>
        <button className="flex items-center h-[17px] w-[73px] pl-1 gap-1 border border-b-0 border-l-0 border-[#a8a8a8] whitespace-nowrap">
          <svg viewBox="0 0 16 16" className="w-4 h-4 shrink-0" aria-hidden="true">
            <path d="M6 1 L11 7 H8 V11 H4 V7 H1 Z" fill="#4da33c" stroke="#2c6c20" strokeWidth="0.8" />
            <path d="M10 15 L5 10 H8 V6 H12 V10 H15 Z" fill="#2d5d9c" stroke="#1b3659" strokeWidth="0.8" />
            <path d="M3 15 H14" stroke="#222" strokeWidth="1.500" />
          </svg>
          文件传输
        </button>
      </div>

      <div className="flex-1 flex flex-col bg-[#e9e9e9] border-2 border-l border-t-[#8b8f93] border-l-[#8b8f93] border-r-[#7f8489] border-b-[#7f8489]">
        <div className="flex items-center h-5 pl-[6px] border-b border-[#b9bcc0]">
          <span className="w-16">当前路径</span>
          <span className="pb-[2px] text-[10px] font-bold">C:</span>
        </div>

        <div className="flex-1 flex">
          <div className="w-[182px] shrink-0 flex flex-col border-r-2 border-[#8f979e] overflow-hidden">
            <ul className="flex flex-col h-[158px] mt-px leading-[14px] whitespace-nowrap">
              <li className="flex-1 flex items-center pl-2">
                <span className="w-2 h-2 border border-[#a9b3c6] flex items-center justify-center">
                  <span className="w-1 h-px bg-[#5a7ab8]" />
                </span>
                <span className="w-1 h-px bg-[#bbb] mr-px" />
                <DriveIcon />
                <span className="ml-[3px]">本地磁盘（<b>C</b>）</span>
              </li>
              {treeFolders.map((name) => (
                <li key={name} className="flex-1 flex items-center ml-3 pl-[16px] border-l border-dotted border-[#b3bcb3]">
                  <span className="h-full border-l border-dotted border-[#b3bcb3]" />
                  <span className="w-2 mr-[2px] border-t border-dotted border-[#aaa]" />
                  <ZipFolder />
                  <b className="ml-[4px] text-[10px] font-['DejaVu_Sans_Condensed','DejaVu_Sans',sans-serif]">{name}</b>
                </li>
              ))}
              {['D', 'E'].map((drive) => (
                <li key={drive} className="flex-1 flex items-center ml-3 border-l border-dotted border-[#b3bcb3]">
                  <span className="w-2 border-t border-dotted border-[#aaa]" />
                  <DriveIcon disc />
                  <span className="ml-[4px]">光驱（<b>{drive}</b>）</span>
                </li>
              ))}
            </ul>
            <div className="flex items-center justify-between h-4 mt-auto mb-px pl-[7px] pr-[6px]">
              <svg viewBox="0 0 4 6" className="w-1 h-[6px]" aria-hidden="true"><path d="M4 0 V6 L0 3 Z" fill="#555" /></svg>
              <div className="flex items-center justify-center gap-[1px] w-[125px] h-[13px] ml-[7px] mr-auto border border-[#9b9b9b] rounded-[2px] bg-linear-to-b from-[#f1f1f1] to-[#cfcfcf]">
                <span className="w-[2px] h-[6px] bg-[#888]" />
                <span className="w-[2px] h-[6px] bg-[#888]" />
                <span className="w-[2px] h-[6px] bg-[#888]" />
              </div>
              <svg viewBox="0 0 4 6" className="w-1 h-[6px]" aria-hidden="true"><path d="M0 0 V6 L4 3 Z" fill="#555" /></svg>
            </div>
          </div>

          <div className="flex-1 pl-[5px] pt-[3px]">
            <table className="w-[328px] h-[264px] table-fixed border-collapse text-left leading-[14px]">
              <colgroup>
                <col className="w-[174px]" />
                <col className="w-[62px]" />
                <col className="w-[92px]" />
              </colgroup>
              <thead>
                <tr className="h-5">
                  <th className="p-0 pb-1 pl-[1px] font-normal">文件名称</th>
                  <th className="p-0 pb-1 pl-[3px] font-normal">文件类型</th>
                  <th className="p-0 pb-1 pl-1 font-normal">文件大小</th>
                </tr>
              </thead>
              <tbody className="text-[10px] font-['DejaVu_Sans_Condensed','DejaVu_Sans','Noto_Sans_CJK_SC',sans-serif]">
                {files.map(([name, type, size], i) => {
                  const selected = i === 5;
                  const cell = selected ? 'p-0 bg-[#1e90f8] text-[#e4f1ff]' : 'p-0';
                  return (
                    <tr key={name} className="h-[15px] whitespace-nowrap">
                      <td className="p-0">
                        <div className="flex items-center h-[15px]">
                          {i < 8 ? <ZipFolder selected={selected} className="h-[15px]" /> : <SysFile />}
                          <b className={selected ? 'flex-1 ml-[1px] mr-[1px] bg-[#1e90f8] text-[#e4f1ff] leading-[15px]' : 'ml-[1px]'}>{name}</b>
                        </div>
                      </td>
                      <td className={cell}><span className="pl-[3px] text-[11px]">{type}</span></td>
                      <td className={cell}><b className="pl-1">{size}</b></td>
                    </tr>
                  );
                })}
              </tbody>
            </table>
          </div>
        </div>
      </div>

      <footer className="flex items-center h-[17px] bg-[#efe7e1] text-[#333]">
        <span className="w-[191px] pl-[1px] border-r border-[#ddd5cf]">本地磁盘(C) 总大小：39.99 GB</span>
        <span className="w-[193px] pl-1 border-r border-[#ddd5cf]">可用空间：31.29 GB</span>
        <SizeGrip />
      </footer>

      <ContextMenu />
    </section>
  );
}

function XpTaskbar() {
  return (
    <div className={`flex items-center h-[27px] pl-[2px] pr-[3px] bg-[#d1cfc6] border-t border-[#f1f0ea] text-[11px] text-[#222] ${sunFont}`}>
      <button className="flex items-center gap-[2px] w-11 h-[21px] pl-[1px] border border-t-white border-l-white border-r-2 border-r-[#666] border-b-2 border-b-[#666] whitespace-nowrap">
        <WinFlag />
        开始
      </button>
      <button className="flex items-center gap-[3px] w-[148px] h-[21px] ml-1 pl-[3px] border border-t-2 border-t-[#555] border-l-[#555] border-r-[#eee] border-b-[#eee] bg-[#dfdfd9] text-[9px]">
        <SmallFolder />
        Program Files
      </button>
      <div className="flex items-center h-[21px] ml-auto">
        <svg viewBox="0 0 16 14" className="w-4 h-[14px] mr-[6px]" aria-hidden="true">
          <path d="M4 1 V5 M7 1 V5 M3 3 H9" stroke="#555" />
          <rect x="1" y="5" width="14" height="8" rx="2" fill="#7c7c79" stroke="#444" />
          <path d="M3 8 H13 M3 10.500 H13" stroke="#ccc" strokeDasharray="1.500 1" />
        </svg>
        <div className="flex items-center h-full px-1 border-x border-[#aeaca4]">
          <svg viewBox="0 0 14 15" className="w-[14px] h-[15px]" aria-hidden="true">
            <rect x="0.800" y="0.800" width="12" height="12" rx="2" fill="#f6eea0" stroke="#444" />
            <path d="M9 13 L12.500 15 V11 Z" fill="#333" />
            <path d="M5 5 Q5 3 7 3 Q9 3 9 5 Q9 6.500 7 7 V8 M7 9.500 V11" fill="none" stroke="#223b9a" strokeWidth="1.500" />
          </svg>
        </div>
        <div className="flex flex-col items-center justify-between h-[14px] ml-1 mr-11">
          <svg viewBox="0 0 8 6" className="w-2 h-[6px]" aria-hidden="true"><path d="M2 0.500 H7.500 V3.500 H2 Z M0.500 2.500 H5.500 V5.500 H0.500 Z" fill="#d1cfc6" stroke="#333" /></svg>
          <Caret />
        </div>
        <div className="flex items-center h-5 gap-1 pl-1 border border-t-[#aaa89f] border-l-[#aaa89f] border-r-[#eee] border-b-[#eee]">
          <span className="font-bold">«</span>
          <svg viewBox="0 0 16 16" className="w-4 h-4" aria-hidden="true">
            <circle cx="8" cy="8" r="7.500" fill="#a9cfee" stroke="#5c97c8" />
            <path d="M4 6 L9 3 L12 6 V11 L7 13 L4 10 Z M4 6 L8 8 L12 6 M8 8 L7 13" fill="none" stroke="#2a6dac" strokeWidth="1.300" />
          </svg>
          <span className="w-[34px] text-[10px]">22:50</span>
        </div>
      </div>
    </div>
  );
}

function XpDesktop() {
  return (
    <div className="relative flex-1 flex flex-col mx-[173px] mt-[5px] mb-[5px] bg-[#2f69a1]">
      <div className={`flex-1 grid grid-rows-9 grid-flow-col auto-cols-[72px] text-white ${sunFont}`}>
        {desktopIcons.map(({ label, icon, cjk }, i) => (
          <button key={i} className="flex flex-col items-center self-start pt-[1px]">
            {icon}
            <span className={cjk ? 'mt-[2px] text-[11px] leading-[11px] whitespace-nowrap' : 'mt-[2px] text-[9px] leading-[11px] whitespace-nowrap'}>
              {label}
            </span>
          </button>
        ))}
      </div>
      <XpTaskbar />
      <ExplorerWindow />
      <ServerWindow />
      <FileManagerWindow />
      <svg viewBox="0 0 12 19" className="absolute left-[615px] top-[354px] w-3 h-[19px]" aria-hidden="true">
        <path d="M1 1 V15 L4.200 12 L6.500 17.500 L9 16.500 L6.700 11.200 H11 Z" fill="#e6e6e6" stroke="#2a2a2a" strokeWidth="1.200" />
      </svg>
    </div>
  );
}

/* ---------- Windows 7 taskbar ---------- */

function BrowserGreen() {
  return (
    <svg viewBox="0 0 28 28" className="w-7 h-7 shrink-0" aria-hidden="true">
      <circle cx="14" cy="14" r="13" fill="#eef6ee" />
      <path d="M24 15.500 H10 Q10.500 20 14.500 20 Q17 20 18.500 18 H23.500 Q21.500 24.500 14 24.500 Q4.500 24 5 14.500 Q5.500 5 14.500 4.500 Q24.500 5 24 15.500 Z M10 12 H19 Q18.500 8.500 14.500 8.500 Q11 8.500 10 12 Z" fill="#189a3a" fillRule="evenodd" />
      <path d="M3 25 Q0 19 9 10 Q19 1 26 1 Q14 5 8 14 Q3 22 7 26 Z" fill="#3fb054" />
    </svg>
  );
}

function NotepadIcon() {
  return (
    <svg viewBox="0 0 28 28" className="w-7 h-7 shrink-0" aria-hidden="true">
      <path d="M10 3 L26 5 L21 23 L1 18 Z" fill="#5fb0c6" />
      <path d="M10 3 L20 4 L10 16 L4 14 Z" fill="#a7dbe6" />
      <path d="M26 5 L28 8 L24 25 L20 23 Z" fill="#6e7264" />
      <path d="M1 18 L21 22 L23 25 L18 26 L2 20 Z" fill="#e3eef1" />
    </svg>
  );
}

function FolderWin7() {
  return (
    <svg viewBox="0 0 28 28" className="w-7 h-7 shrink-0" aria-hidden="true">
      <path d="M3 3 L9 2 L14 4 V24 L4 27 Z" fill="#e5c04c" />
      <path d="M13 2 H20 V22 L12 26 Z" fill="#f9eba2" />
      <path d="M3 5 L11 7 V26 L4 27 Z" fill="#f3da77" />
      <path d="M18 19 L24 24 L13 26 Z" fill="#d9ac36" />
    </svg>
  );
}

function VisualStudio() {
  return (
    <svg viewBox="0 0 28 28" className="w-7 h-7 shrink-0" aria-hidden="true">
      <path d="M8 6 Q1 8 0 14 Q1 20 8 22 L11 17 L6 14 L11 10 Z" fill="#3d86ce" />
      <path d="M8 6 Q3 8 2 11 L6 14 L13 8 Z" fill="#f6c929" />
      <path d="M21 7 Q27 9 28 14 Q27 20 20 22 L16 18 L22 14 L17 10 Z" fill="#62a83c" />
      <path d="M28 14 Q28 9 22 7 L20 11 L24 14 Z" fill="#3d86ce" />
      <path d="M20 22 L15 18 L18 15 L24 18 Z" fill="#f1b723" />
      <path d="M5 18 L18 5 Q23 5 23 10 L11 22 Q5 23 5 18 Z" fill="#e35b1f" />
      <path d="M7 18 L18 7 Q20 6 21 8" fill="none" stroke="#f4915c" strokeWidth="1.500" />
    </svg>
  );
}

function MfcIcon() {
  return (
    <svg viewBox="0 0 28 28" className="w-7 h-7 shrink-0" aria-hidden="true" fontFamily="Liberation Serif" fontWeight="700" fontSize="10" textAnchor="middle">
      <path d="M7 3 L9 1 H21 V12 L19 14 Z" fill="#c2611a" />
      <rect x="7" y="3" width="12" height="11" fill="#f8b067" />
      <path d="M1 16 L3 14 H14 V25 L12 27 Z" fill="#1c5f2a" />
      <rect x="1" y="16" width="12" height="11" fill="#3e9e51" />
      <path d="M14 16 L16 14 H27 V25 L25 27 Z" fill="#123d7c" />
      <rect x="14" y="16" width="12" height="11" fill="#7ab8f2" />
      <text x="13" y="12" fill="#b3230d">M</text>
      <text x="7" y="25" fill="#f2f9f2">F</text>
      <text x="20" y="25" fill="#1d4fa8">C</text>
    </svg>
  );
}

const taskGroups = [
  [{ label: 'VC驿站-C++...', icon: <BrowserGreen /> }],
  [{ label: '教程说明.txt ...', icon: <NotepadIcon /> }],
  [{ label: '教程资源', icon: <FolderWin7 /> }],
  [{ label: 'XP测试系统 ...', icon: <VmwareLogo className="w-7 h-7 shrink-0" /> }],
  [
    { label: '起始页 - Mic...', icon: <VisualStudio /> },
    { label: 'Client - Micr...', icon: <VisualStudio /> },
  ],
  [
    { label: 'ForData 远...', icon: <MfcIcon /> },
    { label: '文件管理', icon: <MfcIcon />, active: true },
  ],
  [{ label: '服务端生成器', icon: <MfcIcon /> }],
];

function Win7Tray() {
  return (
    <div className="flex items-center h-full ml-auto">
      <span className="mr-[9px] text-[10px] font-['Liberation_Mono',monospace]">CH</span>
      <svg viewBox="0 0 14 12" className="w-[14px] h-3" aria-hidden="true">
        <rect x="0.500" y="4" width="13" height="7" rx="1.500" fill="#b4b6b2" stroke="#888" />
        <path d="M4 1 V4 M2.500 7 H11.500 M2.500 9 H11.500" stroke="#7a7c7a" strokeDasharray="1.500 1" />
      </svg>
      <svg viewBox="0 0 14 14" className="w-[14px] h-[14px] ml-[6px]" aria-hidden="true">
        <circle cx="7" cy="7" r="6.500" fill="#1b2fb0" stroke="#0e1c6c" />
        <path d="M5 5.500 Q5 3.500 7 3.500 Q9 3.500 9 5.500 Q9 7 7 7.500 V8.500 M7 10 V11.500" fill="none" stroke="#fff" strokeWidth="1.500" />
      </svg>
      <div className="flex flex-col items-center justify-between h-[14px] mx-[9px]">
        <svg viewBox="0 0 8 6" className="w-2 h-[6px]" aria-hidden="true"><path d="M2 0.500 H7.500 V3.500 H2 Z M0.500 2.500 H5.500 V5.500 H0.500 Z" fill="none" stroke="#eef2f6" /></svg>
        <Caret className="text-[#eef2f6]" />
      </div>
      <svg viewBox="0 0 8 5" className="w-2 h-[5px] mr-[10px]" aria-hidden="true"><path d="M0 5 H8 L4 0 Z" fill="#e8edf2" /></svg>
      <svg viewBox="0 0 16 16" className="w-4 h-4" aria-hidden="true">
        <ellipse cx="7" cy="6" rx="4.500" ry="5.500" fill="#1f1a18" />
        <path d="M1 11 Q7 6 13 11 L11 15 H2 Z" fill="#d8402a" />
        <circle cx="11.500" cy="11.500" r="4" fill="#f5a936" />
        <path d="M4 7 Q7 5 10 7 L7 9 Z" fill="#f0b93b" />
      </svg>
      <svg viewBox="0 0 16 16" className="w-4 h-4 ml-2" aria-hidden="true">
        <path d="M2 1 V15" stroke="#f1f1f1" strokeWidth="1.600" />
        <path d="M3 2 H11 V8 H3 Z" fill="#f1f1f1" />
        <circle cx="11" cy="11" r="4.500" fill="#d33b2b" />
        <path d="M9 9 L13 13 M13 9 L9 13" stroke="#fff" strokeWidth="1.500" />
      </svg>
      <svg viewBox="0 0 16 16" className="w-4 h-4 ml-[6px]" aria-hidden="true">
        <path d="M1 6 H4 L8 2 V14 L4 10 H1 Z" fill="#f2f4f6" stroke="#77838f" strokeWidth="0.6" />
        <path d="M10 5 Q12 8 10 11 M12.500 3.500 Q15.500 8 12.500 12.500" fill="none" stroke="#e3e8ec" strokeWidth="1.200" />
      </svg>
      <svg viewBox="0 0 16 14" className="w-4 h-[14px] ml-[7px]" aria-hidden="true">
        <path d="M1 11 H3 V13 H1 Z M4 9 H6 V13 H4 Z M7 7 H9 V13 H7 Z M10 4 H12 V13 H10 Z M13 1 H15 V13 H13 Z" fill="#e3e8ec" stroke="#5f6f7e" strokeWidth="0.6" />
      </svg>
      <div className="w-[90px] pl-2 text-center leading-4">
        下午 10:50
        <br />
        2012-01-15
      </div>
      <button aria-label="显示桌面" className="w-[11px] h-full border-l border-[#9db2c6] bg-linear-to-b from-[#7b94ab] to-[#4a6178]" />
    </div>
  );
}

function Win7Taskbar() {
  return (
    <footer className="flex items-center h-[37px] border-t-2 border-[#9c9ea1] bg-[#8094aa] text-[11px] text-[#eef3f8]">
      <button aria-label="开始" className="flex items-center justify-center w-9 h-full mr-3">
        <svg viewBox="0 0 32 32" className="w-8 h-8" aria-hidden="true">
          <defs>
            <radialGradient id="orb" cx="50%" cy="85%" r="80%">
              <stop offset="0" stopColor="#3fc3f5" />
              <stop offset="0.600" stopColor="#17609f" />
              <stop offset="1" stopColor="#2f5d88" />
            </radialGradient>
          </defs>
          <circle cx="16" cy="16" r="15" fill="url(#orb)" stroke="#3b5f82" />
          <path d="M3 12 Q16 -6 29 12 Q16 8 3 12 Z" fill="#a8c4da" opacity="0.6" />
          <path d="M10 9 Q13 7 15.500 9 L14.500 15 Q12 13 8.500 15 Z" fill="#e8622c" />
          <path d="M17 10 Q20 11.500 23.500 10 L22 16 Q19 17 15.800 15.500 Z" fill="#8cc63f" />
          <path d="M8.300 16.500 Q11.500 15 14.200 16.500 L13 22.500 Q10.500 21 7 22.500 Z" fill="#4aa3e8" />
          <path d="M15.500 17 Q19 18.500 21.800 17.500 L20.500 23.500 Q17.500 24.500 14.300 23 Z" fill="#fbcb34" />
        </svg>
      </button>
      <div className="flex h-full gap-1">
        {taskGroups.map((group, i) => (
          <div key={i} className="flex h-full">
            {group.map((task) => (
              <button
                key={task.label}
                className={
                  'active' in task
                    ? 'flex items-center w-[123px] h-full pl-[8px] gap-[5px] rounded-[2px] border border-[#dbe3ea] border-r-[#5f7488] bg-linear-to-b from-[#d3dce4] to-[#a9b9c8] whitespace-nowrap overflow-hidden'
                    : 'flex items-center w-[123px] h-full pl-[8px] gap-[5px] rounded-[2px] border border-[#b6c5d3] border-r-[#566b80] bg-linear-to-b from-[#b3c2d0] via-[#8ea3b7] via-50% to-[#869db3] whitespace-nowrap overflow-hidden'
                }
              >
                {task.icon}
                {task.label}
              </button>
            ))}
          </div>
        ))}
      </div>
      <Win7Tray />
    </footer>
  );
}

/* ---------- Player ---------- */

const vmMenu = ['文件(F)', '编辑(E)', '查看(V)', '虚拟机(M)', '分组(T)', '窗口(W)', '帮助(H)'];

function Workstation() {
  return (
    <div className={`flex-1 flex flex-col bg-[#111] ${uiFont}`}>
      <header className="flex items-center h-5 pr-[1px] overflow-hidden bg-linear-to-b from-[#bccdd9] to-[#cfe2f0] text-[11px] text-[#4d5963]">
        <VmwareLogo className="w-4 h-4 -ml-[6px]" />
        <span className="ml-[6px] flex-1">XP测试系统 - VMware Workstation</span>
        <div className="flex gap-[3px] self-start h-4">
          {['M4 8 H10', 'M4 4 H9 V9 H4 Z M6 2 H11 V7', 'M4 3 L9 9 M9 3 L4 9'].map((d, i) => (
            <button key={d} aria-label={['最小化', '还原', '关闭'][i]} className="flex items-center justify-center w-7 rounded-b-[2px] border border-t-0 border-[#9db3c4]">
              <svg viewBox="0 0 13 12" className="w-[13px] h-3" aria-hidden="true"><path d={d} fill="none" stroke="#7d8a94" strokeWidth="2" /></svg>
            </button>
          ))}
        </div>
      </header>
      <nav className="flex items-center gap-4 h-[25px] pl-[10px] bg-linear-to-b from-[#e9e7ea] from-20% to-[#cfd6e6] to-60% text-[11px] text-[#1f1f1f]">
        {vmMenu.map((item) => (
          <button key={item}>{item}</button>
        ))}
      </nav>
      <VmToolbar />
      <div className="flex-1 flex border-t border-[#9a9a9c]">
        <VmSidebar />
        <div className="flex-1 flex">
          <XpDesktop />
        </div>
      </div>
      <Win7Taskbar />
    </div>
  );
}

function PlayerWindow() {
  return (
    <main className="flex-1 flex flex-col border-x border-b border-[#6d2b27] bg-black">
      <header className="flex items-center h-[39px] pl-[10px] border-t border-[#6b3b38] bg-[#5a221c] text-white">
        <CameraIcon />
        <h1 className="ml-1 flex-1 text-[16px] font-['Open_Sans',sans-serif]">2:48/46:20 Player</h1>
        {[
          ['Minimize', 'M1 6.500 H12'],
          ['Maximize', 'M1.500 1.500 H11.500 V11.500 H1.500 Z'],
          ['Close', 'M1 1 L12 12 M12 1 L1 12'],
        ].map(([label, d]) => (
          <button key={label} aria-label={label} className="flex items-center justify-center w-[58px] h-full">
            <svg viewBox="0 0 13 13" className="w-[13px] h-[13px]" aria-hidden="true">
              <path d={d} fill="none" stroke="#fff" strokeWidth="1.100" />
            </svg>
          </button>
        ))}
        <span className="w-[2px]" />
      </header>
      <div className="relative flex-1 flex flex-col pt-[45px] pl-1 pr-[5px]">
        <Workstation />
        <div className="flex items-center justify-end h-[45px] -mr-[5px] pt-[26px] text-[16px] leading-4 text-[#b4b4b4] font-['Liberation_Sans',sans-serif]">
          https://blog.csdn.net/qq_33608000
        </div>
        <div className="absolute right-[25px] top-0 text-[16px] leading-4 font-bold text-[#f00] font-['Liberation_Mono',monospace]">2:48/46:20</div>
        <div className="absolute right-[30px] top-[15px] flex items-end gap-5 h-10 font-bold text-[#f00] whitespace-nowrap">
          <span className="text-[34px] leading-10 font-['Noto_Sans_CJK_SC',sans-serif]">溜客真正零利润翻录团购</span>
          <span className="text-[29px] leading-9 font-['Liberation_Mono',monospace]">BBS.176Ku.Com</span>
        </div>
        <div className="absolute right-[22px] top-[45px] text-[12px] leading-[14px] font-bold text-[#dd3a22] font-['Liberation_Mono',monospace]">2:21/46:54</div>
      </div>
    </main>
  );
}

function DownloadBar() {
  return (
    <div className="flex items-start h-[9px] overflow-hidden bg-[#5a5a5c] text-[14px] leading-4 text-[#e4e4e4] font-['Noto_Sans',sans-serif] whitespace-nowrap">
      <div className="w-[75px] h-full pl-[2px] pt-1 border-t border-[#d8d8d8] bg-[#4e4e50]">Modul</div>
      <span className="w-[265px] pl-[10px]">Downloading Warface International</span>
      <div className="w-[250px] h-4 mt-1 rounded-[2px] bg-[#1b1b1b]">
        <div className="w-4/5 h-full rounded-[2px] bg-linear-to-r from-[#e8d68a] via-[#c79f2c] via-20% to-[#c9a02b]" />
      </div>
      <span className="w-[70px] pl-3">80%</span>
      <div className="w-[174px] h-full pl-[62px] bg-[#47474a]">Expand</div>
    </div>
  );
}

export default function App() {
  return (
    <div className="min-h-screen flex flex-col overflow-hidden bg-black">
      <div className="flex-1 flex">
        <div className="w-[9px] flex flex-col overflow-hidden bg-linear-to-r from-[#ededed] to-[#cfcfcf]">
          <div className="h-[41px] bg-[#1f1f1f]" />
          <div className="h-[71px]" />
          <div className="h-[67px] border-y border-[#c9c9c9] bg-[#f1f1f1]" />
          <div className="w-[2px] h-5 mt-auto rounded-r-full bg-[#2f80e8]" />
        </div>
        <PlayerWindow />
        <div className="w-[9px] flex flex-col overflow-hidden bg-black">
          <div className="h-[2px] bg-[#55555a]" />
          <div className="h-[30px] bg-[#ef9f24]" />
          <div className="flex items-center h-[95px] mt-1 bg-[#1d2029]">
            <svg viewBox="0 0 9 14" className="w-[9px] h-[14px] -mt-11" aria-hidden="true">
              <path d="M0 4 L3 7 L0 10 M7 1 L2 7 L7 13" fill="none" stroke="#9a9ca3" />
            </svg>
          </div>
          <div className="h-[675px] bg-linear-to-b from-[#0b0d28] via-[#1b2d63] via-20% to-[#10142c]" />
          <div className="h-5 mt-auto -mb-[9px] bg-[#5a5a5c]" />
        </div>
      </div>
      <DownloadBar />
    </div>
  );
}
